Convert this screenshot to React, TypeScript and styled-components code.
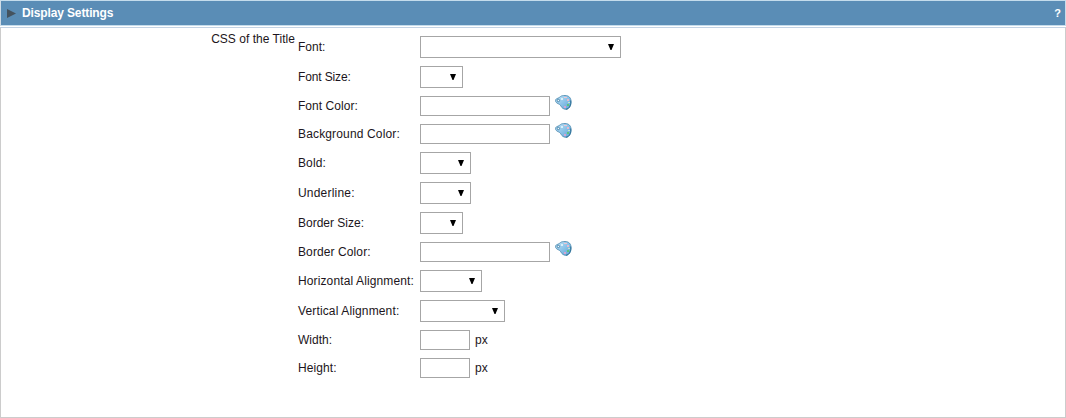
import React from "react";
import styled, { createGlobalStyle } from "styled-components";

const GlobalStyle = createGlobalStyle`
  *, *::before, *::after { box-sizing: border-box; }
  body {
    margin: 0;
    background: #fff;
    color: #1c1520;
    font: 12px/14px "Liberation Sans", Arial, sans-serif;
  }
`;

const Panel = styled.section`
  height: 418px;
  display: flex;
  flex-direction: column;
`;

const Header = styled.header`
  height: 26px;
  display: flex;
  align-items: center;
  padding: 0 4px 0 6px;
  background: #5a8db6;
  border: 1px solid #c4dcec;
  border-left-color: #d0dce6;
  color: #fff;
  font-weight: bold;
`;

const Toggle = styled.svg`
  width: 9px;
  height: 9px;
  margin-right: 6px;
`;

const Title = styled.h1`
  margin: 0;
  flex: 1;
  font-size: 12px;
  letter-spacing: -0.13px;
`;

const Help = styled.span`
  font-size: 11px;
`;

const Body = styled.div`
  flex: 1;
  display: flex;
  margin-top: 1px;
  padding-top: 8px;
  border: 1px solid #cccccc;
  border-top-color: #c3d3e4;
`;

const Legend = styled.div`
  width: 297px;
  padding: 0 3px 0 0;
  margin-top: -4px;
  text-align: right;
  letter-spacing: 0.03px;
`;

const Fields = styled.div`
  display: flex;
  flex-direction: column;
  gap: 8px;
`;

const Row = styled.div`
  display: flex;
  align-items: center;
`;

const Label = styled.label<{ $spacing: number }>`
  width: 122px;
  white-space: nowrap;
  letter-spacing: ${(p) => p.$spacing}px;
`;

const Select = styled.div<{ $width: number }>`
  width: ${(p) => p.$width}px;
  height: 22px;
  display: flex;
  align-items: center;
  justify-content: flex-end;
  padding-right: 6px;
  border: 1px solid #a6a6a6;
  background: #fff;
`;

const Input = styled.input<{ $width: number }>`
  width: ${(p) => p.$width}px;
  height: 20px;
  padding: 1px 3px;
  border: 1px solid #a6a6a6;
  background: #fff;
  font: inherit;
`;

const Unit = styled.span`
  margin-left: 5px;
`;

const PaletteSvg = styled.svg`
  width: 17px;
  height: 15px;
  margin: -7px 0 0 5px;
`;

const Arrow = () => (
  <svg width="6" height="6" viewBox="0 0 6 6">
    <path d="M0 0H6L3.5 6H2.5Z" fill="#000" />
  </svg>
);

const Palette = () => (
  <PaletteSvg viewBox="0 0 17 15">
    <defs>
      <linearGradient id="paint" x1="0" y1="0" x2="1" y2="1">
        <stop offset="0" stopColor="#c3e4f5" />
        <stop offset="0.5" stopColor="#8cc3e8" />
        <stop offset="1" stopColor="#5fa3d4" />
      </linearGradient>
    </defs>
    <path
      d="M5.500 1.500C6.500.7 8 .5 10 .5 12.500.5 14.300 1.500 15.300 3.200 16.300 5.200 16.300 8.200 15.600 10.300 14.800 12.600 13.200 14.300 10.800 14.300 8.400 14.300 6.900 12.800 6 11.200 5.200 9.700 4.300 9.300 3 8.600 1.500 7.900.5 7 .5 5.600.5 4.200 1.600 3.600 3 3.200 4 2.900 4.500 2.200 5.500 1.500Z"
      fill="url(#paint)"
      stroke="#5590b5"
      strokeWidth=".9"
    />
    <path d="M15.700 5.500C16.300 9.500 14.300 14 10.900 14.300" fill="none" stroke="#286b91" strokeWidth=".9" />
    <circle cx="3.400" cy="5.500" r="1.200" fill="#f2fafd" stroke="#3c7ca5" strokeWidth=".9" />
    <path d="M9 2h3v1h-3z" fill="#f0c3cf" />
    <path d="M12 4h2v2h-2z" fill="#e6b9cd" />
    <path d="M12 9h2v2h-2z" fill="#5cc47c" />
    <path d="M13 7h2v1h-2z" fill="#c5e6c9" />
    <path d="M9 11h2v2H9z" fill="#d3a5d2" />
    <path d="M6 3h2v2H6z" fill="#d9f0fa" />
  </PaletteSvg>
);

type Field = {
  label: string;
  kind: "select" | "color" | "size";
  width: number;
  spacing: number;
};

const fields: Field[] = [
  { label: "Font:", kind: "select", width: 201, spacing: 0 },
  { label: "Font Size:", kind: "select", width: 43, spacing: -0.13 },
  { label: "Font Color:", kind: "color", width: 130, spacing: 0.04 },
  { label: "Background Color:", kind: "color", width: 130, spacing: 0.15 },
  { label: "Bold:", kind: "select", width: 51, spacing: 0.1 },
  { label: "Underline:", kind: "select", width: 51, spacing: 0.2 },
  { label: "Border Size:", kind: "select", width: 43, spacing: 0 },
  { label: "Border Color:", kind: "color", width: 130, spacing: 0.1 },
  { label: "Horizontal Alignment:", kind: "select", width: 62, spacing: 0.12 },
  { label: "Vertical Alignment:", kind: "select", width: 85, spacing: 0.14 },
  { label: "Width:", kind: "size", width: 50, spacing: 0 },
  { label: "Height:", kind: "size", width: 50, spacing: 0.1 },
];

export default function App() {
  return (
    <>
      <GlobalStyle />
      <Panel>
        <Header>
          <Toggle viewBox="0 0 9 9">
            <path d="M0 0L9 4.500L0 9Z" fill="#44535f" />
          </Toggle>
          <Title>Display Settings</Title>
          <Help>?</Help>
        </Header>
        <Body>
          <Legend>CSS of the Title</Legend>
          <Fields>
            {fields.map((f) => (
              <Row key={f.label}>
                <Label $spacing={f.spacing}>{f.label}</Label>
                {f.kind === "select" ? (
                  <Select $width={f.width}>
                    <Arrow />
                  </Select>
                ) : (
                  <Input $width={f.width} aria-label={f.label} />
                )}
                {f.kind === "color" && <Palette />}
                {f.kind === "size" && <Unit>px</Unit>}
              </Row>
            ))}
          </Fields>
        </Body>
      </Panel>
    </>
  );
}
